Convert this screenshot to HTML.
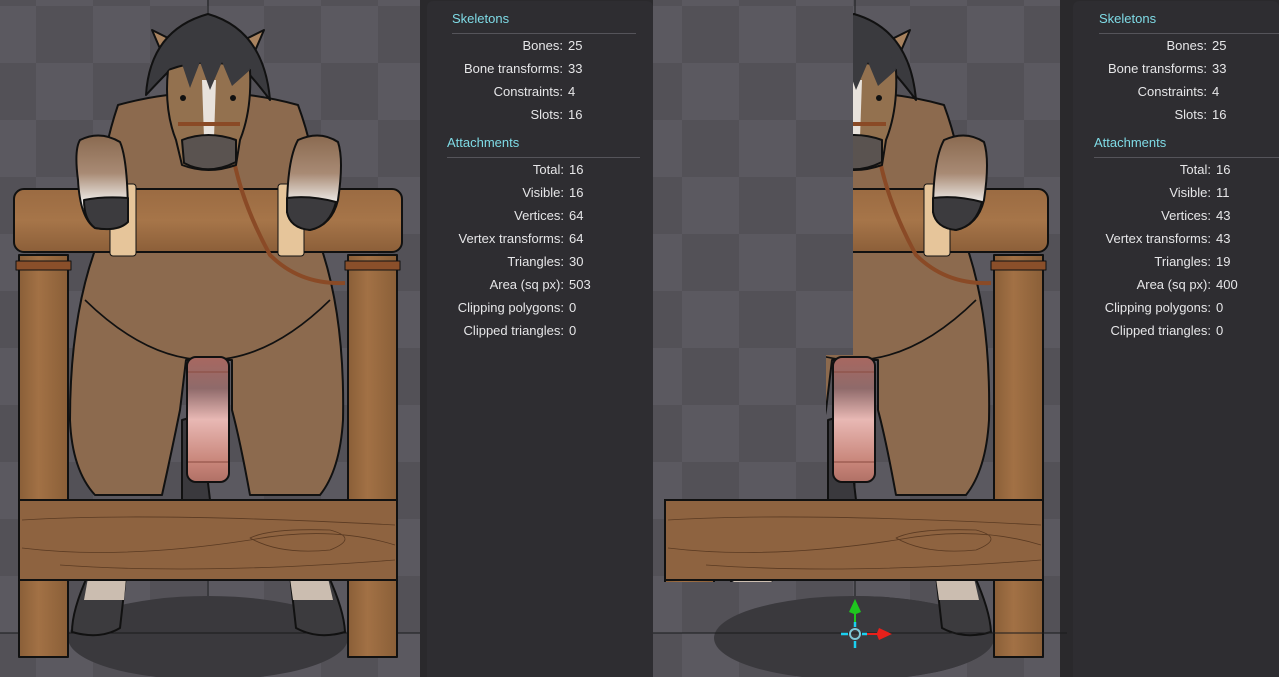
<!DOCTYPE html>
<html><head><meta charset="utf-8"><style>
html,body{margin:0;padding:0;background:#2a292c;width:1279px;height:677px;overflow:hidden;font-family:"Liberation Sans",sans-serif}
.vp{position:absolute;top:0;height:677px}
.panel{position:absolute;top:1px;height:676px;background:#2e2d31;border-radius:6px 6px 0 0;color:#e6e6e8;font-size:13px}
.h{position:absolute;color:#7fdbe6;font-size:13px}
.ln{position:absolute;height:1px;background:#55545a}
.r{position:absolute;white-space:nowrap;height:16px;line-height:16px;color:#e6e6e8;font-size:13px}
.r b{font-weight:normal;position:absolute;right:0;text-align:right}
</style></head><body>
<svg width="0" height="0" style="position:absolute">
<defs>
<pattern id="chk" width="114" height="114" patternUnits="userSpaceOnUse" patternTransform="translate(36,6)">
<rect width="114" height="114" fill="#5b5960"/>
<rect width="57" height="57" fill="#535157"/>
<rect x="57" y="57" width="57" height="57" fill="#535157"/>
</pattern>
<linearGradient id="wood" x1="0" x2="1"><stop offset="0" stop-color="#8a5f38"/><stop offset=".4" stop-color="#a27145"/><stop offset="1" stop-color="#8a5f38"/></linearGradient>
<linearGradient id="beam" x1="0" y1="0" x2="0" y2="1"><stop offset="0" stop-color="#9b6b42"/><stop offset=".5" stop-color="#a67549"/><stop offset="1" stop-color="#8c5f39"/></linearGradient>
<linearGradient id="pen" x1="0" y1="0" x2="0" y2="1"><stop offset="0" stop-color="#a86860"/><stop offset=".25" stop-color="#8f6a6a"/><stop offset=".5" stop-color="#e8b8b4"/><stop offset=".85" stop-color="#c78478"/><stop offset="1" stop-color="#b07066"/></linearGradient>
<linearGradient id="arm" x1="0" y1="0" x2="0" y2="1"><stop offset="0" stop-color="#8a6a50"/><stop offset=".4" stop-color="#a88a74"/><stop offset=".7" stop-color="#ece8e4"/></linearGradient>
<g id="horse" stroke="#111" stroke-width="2" stroke-linejoin="round">
<ellipse cx="208" cy="638" rx="140" ry="42" fill="#3a393d" stroke="none"/>
<line x1="0" y1="633" x2="420" y2="633" stroke="#1a1a1c" stroke-width="1"/>
<rect x="19" y="255" width="49" height="402" fill="url(#wood)"/>
<rect x="348" y="255" width="49" height="402" fill="url(#wood)"/>
<rect x="16" y="261" width="55" height="9" fill="#8a4f2a" stroke-width="1"/>
<rect x="345" y="261" width="55" height="9" fill="#8a4f2a" stroke-width="1"/>
<path d="M88 575 L126 575 L120 628 Q100 640 72 632 Q72 610 88 575Z" fill="#3c3b3e"/>
<path d="M88 578 L126 578 L124 600 L84 600Z" fill="#cbbdb0" stroke="none"/>
<path d="M290 575 L328 575 Q344 610 345 632 Q318 640 296 628Z" fill="#3c3b3e"/>
<path d="M290 578 L328 578 L333 600 L293 600Z" fill="#cbbdb0" stroke="none"/>
<path d="M118 105 Q208 80 298 105 Q322 170 322 250 Q345 320 343 420 Q340 470 320 495 L250 495 Q240 440 232 410 L232 360 L186 360 L180 410 Q172 450 162 495 L95 495 Q72 470 70 420 Q70 320 95 250 Q96 170 118 105Z" fill="#8c6a4e"/>
<path d="M85 300 Q208 420 330 300" fill="none" stroke-width="1.6"/>
<path d="M182 420 L200 415 L210 500 L182 500Z" fill="#3a393d"/>
<rect x="187" y="357" width="42" height="125" rx="9" fill="url(#pen)"/>
<path d="M188 372 L228 372 M188 462 L228 462" stroke="#8a4a40" stroke-width="1"/>
<rect x="19" y="500" width="378" height="80" fill="#8e6340"/>
<path d="M22 520 Q150 512 395 525 M22 548 Q120 560 250 540 Q330 525 395 545 M60 565 Q200 575 395 560 M250 538 Q270 528 330 530 Q360 538 330 550 Q280 555 250 538Z" fill="none" stroke="#5a3a22" stroke-width=".8"/>
<rect x="14" y="189" width="388" height="63" rx="10" fill="url(#beam)"/>
<rect x="110" y="184" width="26" height="72" rx="3" fill="#e6c59a" stroke-width="1"/>
<rect x="278" y="184" width="26" height="72" rx="3" fill="#e6c59a" stroke-width="1"/>
<path d="M232 150 Q240 200 270 255 Q300 285 345 283" fill="none" stroke="#8a4a26" stroke-width="4"/>
<path d="M80 140 Q100 130 120 142 Q128 160 128 220 Q118 232 95 228 Q80 218 78 180 Q74 150 80 140Z" fill="url(#arm)"/>
<path d="M84 200 Q104 196 128 198 L128 222 Q118 232 95 228 Q84 220 84 200Z" fill="#3c3b3e"/>
<path d="M298 140 Q320 130 338 142 Q344 160 338 200 Q332 225 310 230 Q290 228 287 212 Q287 160 298 140Z" fill="url(#arm)"/>
<path d="M287 198 Q310 195 336 202 Q330 226 310 230 Q290 228 287 212Z" fill="#3c3b3e"/>
<path d="M152 30 L176 42 L170 72 Z" fill="#a9835f"/>
<path d="M264 30 L240 42 L246 72 Z" fill="#a9835f"/>
<path d="M146 95 Q150 30 208 14 Q264 30 270 100 Q255 80 245 70 L170 70 Q160 80 146 95Z" fill="#3a3a3e"/>
<path d="M168 70 Q208 55 250 70 Q252 110 240 140 L236 165 Q208 175 182 165 L176 140 Q164 110 168 70Z" fill="#93714f"/>
<path d="M202 80 L216 80 L214 138 L204 138Z" fill="#e8e2dc" stroke="none"/>
<path d="M166 72 L180 58 L190 88 L200 62 L210 90 L222 62 L232 86 L250 70 L245 56 L172 56Z" fill="#3a3a3e" stroke="none"/>
<path d="M182 140 Q208 130 236 140 L236 162 Q208 176 184 163Z" fill="#5a5350"/>
<path d="M178 124 L240 124" stroke="#8a4a26" stroke-width="4"/>
<circle cx="183" cy="98" r="3" fill="#111" stroke="none"/>
<circle cx="233" cy="98" r="3" fill="#111" stroke="none"/>
</g>
<clipPath id="cl2"><rect x="207" y="0" width="300" height="700"/><rect x="0" y="499" width="420" height="83"/><rect x="180" y="355" width="52" height="145"/></clipPath>
</defs>
</svg>

<svg class="vp" style="left:0" width="420" height="677">
<rect width="420" height="677" fill="url(#chk)"/>
<line x1="208" y1="0" x2="208" y2="677" stroke="#1a1a1c" stroke-width="1"/>
<use href="#horse"/>
</svg>

<div class="panel" style="left:427px;width:226px">
<div class="h" style="left:25px;top:10px">Skeletons</div>
<div class="ln" style="left:25px;top:32px;width:184px"></div>
<div class="h" style="left:20px;top:134px">Attachments</div>
<div class="ln" style="left:20px;top:156px;width:193px"></div>
</div>
<div class="panel" style="left:1073px;width:206px">
<div class="h" style="left:26px;top:10px">Skeletons</div>
<div class="ln" style="left:26px;top:32px;width:180px"></div>
<div class="h" style="left:21px;top:134px">Attachments</div>
<div class="ln" style="left:21px;top:156px;width:185px"></div>
</div>

<svg class="vp" style="left:653px" width="414" height="677">
<rect width="414" height="677" fill="url(#chk)" transform="translate(-7,0)"/>
<line x1="202" y1="0" x2="202" y2="677" stroke="#1a1a1c" stroke-width="1"/>
<ellipse cx="201" cy="638" rx="140" ry="42" fill="#3a393d"/>
<g transform="translate(-7,0)" clip-path="url(#cl2)"><use href="#horse"/></g>
<line x1="0" y1="633" x2="414" y2="633" stroke="#1a1a1c" stroke-width="1"/>
<g transform="translate(202,634)">
<path d="M-1 -10 L-1 -20 L-6 -22 L0 -35 L6 -22 L1 -20 L1 -10Z" fill="#1ec81e"/>
<path d="M10 -1 L22 -1 L24 -6 L37 0 L24 6 L22 1 L10 1Z" fill="#e8201a"/>
<circle r="5" fill="none" stroke="#7fc8d8" stroke-width="2"/>
<path d="M-14 0 H-7 M7 0 H12 M0 -12 V-7 M0 7 V14" stroke="#1ad0f0" stroke-width="2.5"/>
</g>
</svg>

<div style="position:absolute;left:0;top:0">
<div class="r" style="left:0;top:38px;width:563px"><b>Bones:</b></div><div class="r" style="left:568px;top:38px">25</div>
<div class="r" style="left:0;top:61px;width:563px"><b>Bone transforms:</b></div><div class="r" style="left:568px;top:61px">33</div>
<div class="r" style="left:0;top:84px;width:563px"><b>Constraints:</b></div><div class="r" style="left:568px;top:84px">4</div>
<div class="r" style="left:0;top:107px;width:563px"><b>Slots:</b></div><div class="r" style="left:568px;top:107px">16</div>
<div class="r" style="left:0;top:162px;width:564px"><b>Total:</b></div><div class="r" style="left:569px;top:162px">16</div>
<div class="r" style="left:0;top:185px;width:564px"><b>Visible:</b></div><div class="r" style="left:569px;top:185px">16</div>
<div class="r" style="left:0;top:208px;width:564px"><b>Vertices:</b></div><div class="r" style="left:569px;top:208px">64</div>
<div class="r" style="left:0;top:231px;width:564px"><b>Vertex transforms:</b></div><div class="r" style="left:569px;top:231px">64</div>
<div class="r" style="left:0;top:254px;width:564px"><b>Triangles:</b></div><div class="r" style="left:569px;top:254px">30</div>
<div class="r" style="left:0;top:277px;width:564px"><b>Area (sq px):</b></div><div class="r" style="left:569px;top:277px">503</div>
<div class="r" style="left:0;top:300px;width:564px"><b>Clipping polygons:</b></div><div class="r" style="left:569px;top:300px">0</div>
<div class="r" style="left:0;top:323px;width:564px"><b>Clipped triangles:</b></div><div class="r" style="left:569px;top:323px">0</div>
<div class="r" style="left:0;top:38px;width:1207px"><b>Bones:</b></div><div class="r" style="left:1212px;top:38px">25</div>
<div class="r" style="left:0;top:61px;width:1207px"><b>Bone transforms:</b></div><div class="r" style="left:1212px;top:61px">33</div>
<div class="r" style="left:0;top:84px;width:1207px"><b>Constraints:</b></div><div class="r" style="left:1212px;top:84px">4</div>
<div class="r" style="left:0;top:107px;width:1207px"><b>Slots:</b></div><div class="r" style="left:1212px;top:107px">16</div>
<div class="r" style="left:0;top:162px;width:1211px"><b>Total:</b></div><div class="r" style="left:1216px;top:162px">16</div>
<div class="r" style="left:0;top:185px;width:1211px"><b>Visible:</b></div><div class="r" style="left:1216px;top:185px">11</div>
<div class="r" style="left:0;top:208px;width:1211px"><b>Vertices:</b></div><div class="r" style="left:1216px;top:208px">43</div>
<div class="r" style="left:0;top:231px;width:1211px"><b>Vertex transforms:</b></div><div class="r" style="left:1216px;top:231px">43</div>
<div class="r" style="left:0;top:254px;width:1211px"><b>Triangles:</b></div><div class="r" style="left:1216px;top:254px">19</div>
<div class="r" style="left:0;top:277px;width:1211px"><b>Area (sq px):</b></div><div class="r" style="left:1216px;top:277px">400</div>
<div class="r" style="left:0;top:300px;width:1211px"><b>Clipping polygons:</b></div><div class="r" style="left:1216px;top:300px">0</div>
<div class="r" style="left:0;top:323px;width:1211px"><b>Clipped triangles:</b></div><div class="r" style="left:1216px;top:323px">0</div>
</div>
</body></html>
